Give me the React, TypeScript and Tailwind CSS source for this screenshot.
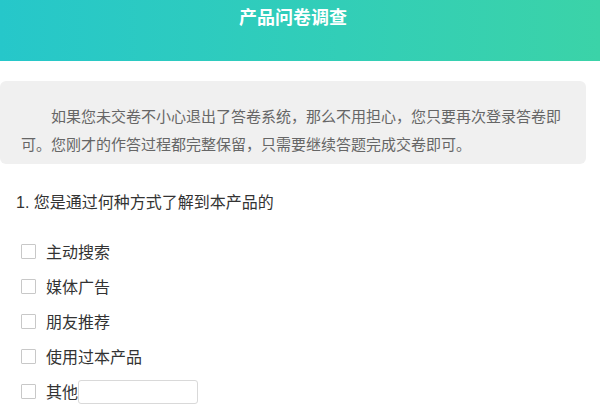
import React from 'react';

const options = ['主动搜索', '媒体广告', '朋友推荐', '使用过本产品'];

function Box() {
  return <span className="h-[15px] w-[15px] shrink-0 border border-[#c8c8c8] bg-white rounded-[1px]" />;
}

export default function App() {
  return (
    <div
      className="w-[600px] h-[411px] overflow-hidden bg-white"
      style={{ fontFamily: '"Liberation Sans", "Noto Sans CJK SC", sans-serif' }}
    >
      <header className="h-[61px] bg-gradient-to-r from-[#26c7ca] to-[#3bd3a8] flex justify-center pt-[6px] pr-[14px]">
        <h1 className="text-[18px] leading-[24px] font-bold text-white">产品问卷调查</h1>
      </header>

      <div className="mt-[20px] w-[586px] rounded-md bg-[#f0f0f0] pl-[21px] pr-[20px] pt-[22px] pb-[5px]">
        <p className="text-[15px] leading-[28px] text-[#666] indent-[30px]">
          如果您未交卷不小心退出了答卷系统，那么不用担心，您只要再次登录答卷即可。您刚才的作答过程都完整保留，只需要继续答题完成交卷即可。
        </p>
      </div>

      <p className="mt-[25px] pl-[16px] text-[16px] leading-[28px] text-[#333]">1. 您是通过何种方式了解到本产品的</p>

      <ul className="mt-[17px] pl-[21px]">
        {options.map((o) => (
          <li key={o} className="h-[35px] flex items-center">
            <Box />
            <span className="ml-[10px] text-[16px] text-[#333] leading-[20px] pt-[2px]">{o}</span>
          </li>
        ))}
        <li className="h-[35px] flex items-center">
          <Box />
          <span className="ml-[10px] text-[16px] text-[#333] leading-[20px] pt-[2px]">其他</span>
          <input
            type="text"
            className="w-[120px] h-[24px] border border-[#d9d9d9] rounded-[3px] outline-none px-1 text-sm"
          />
        </li>
      </ul>
    </div>
  );
}
